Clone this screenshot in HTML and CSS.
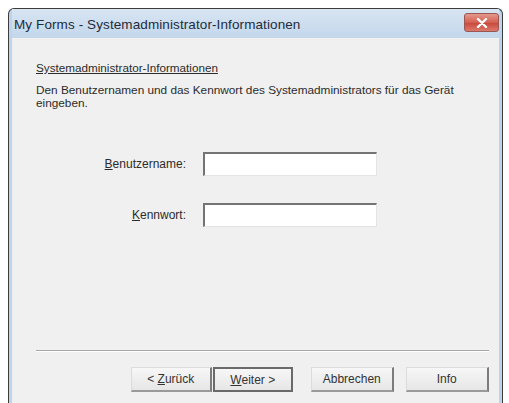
FILE: index.html
```html
<!DOCTYPE html>
<html lang="de">
<head>
    <meta charset="UTF-8">
    <title>My Forms - Systemadministrator-Informationen</title>
    <link rel="stylesheet" href="styles.css">
</head>
<body>
    <div class="window">
        <div class="titlebar">
            <span class="title">My Forms - Systemadministrator-Informationen</span>
            <button class="close-btn" aria-label="Schließen">
                <svg width="12" height="10" viewBox="0 0 12 10">
                    <path d="M2 1 L10 9 M10 1 L2 9" stroke="#fff" stroke-width="2.4" stroke-linecap="round"/>
                </svg>
            </button>
        </div>
        <div class="client">
            <div class="page-head">Systemadministrator-Informationen</div>
            <p class="intro">Den Benutzernamen und das Kennwort des Systemadministrators für das Gerät eingeben.</p>
            <div class="form">
                <label for="user"><u>B</u>enutzername:</label>
                <input type="text" id="user">
                <label for="pass"><u>K</u>ennwort:</label>
                <input type="password" id="pass">
            </div>
            <div class="footer">
                <div class="separator"></div>
                <div class="buttons">
                    <button class="btn back">&lt; <u>Z</u>urück</button>
                    <button class="btn default"><u>W</u>eiter &gt;</button>
                    <button class="btn cancel">Abbrechen</button>
                    <button class="btn">Info</button>
                </div>
            </div>
        </div>
    </div>
</body>
</html>
```

FILE: styles.css
```css
* {
    box-sizing: border-box;
}

html, body {
    overflow: hidden;
}

body {
    margin: 0;
    padding: 8px 6px 0 8px;
    background: #fff;
    font-family: 'Liberation Sans', Arial, sans-serif;
    font-size: 12px;
    color: #2b2b2b;
}

/* window frame */
.window {
    border: 1px solid #3c3c3c;
    border-bottom: none;
    border-radius: 6px 6px 0 0;
    background: #bed4ea;
    padding: 0 3px 0 3px;
    height: 420px;
    display: flex;
    flex-direction: column;
}

.titlebar {
    height: 29px;
    display: flex;
    align-items: flex-start;
    justify-content: space-between;
    padding: 0 0 0 2px;
    background: linear-gradient(#d8e5f2, #c3d7eb);
}

.title {
    font-size: 13.5px;
    color: #1d2c3c;
    margin-top: 8px;
    letter-spacing: 0.1px;
}

.close-btn {
    width: 35px;
    height: 19px;
    margin-top: 4px;
    border: 1px solid #9a5650;
    border-radius: 3px;
    background: linear-gradient(#e39a8e, #d45f50 50%, #c8463a 51%, #dc7a6c);
    display: flex;
    align-items: center;
    justify-content: center;
    padding: 0;
}

/* dialog body */
.client {
    background: #f0f0f0;
    padding: 23px 10px 20px 24px;
    display: flex;
    flex-direction: column;
    height: 374px;
    flex: none;
}

.page-head {
    font-size: 11.7px;
    line-height: 14px;
    text-decoration: underline;
}

.intro {
    margin: 9px 0 0 0;
    font-size: 11.8px;
    line-height: 13px;
    max-width: 440px;
}

.form {
    display: grid;
    grid-template-columns: 150px 174px;
    column-gap: 17px;
    row-gap: 27px;
    align-items: center;
    margin-top: 42px;
}

.form label {
    text-align: right;
}

.form input {
    height: 24px;
    border: 1px solid #e4e4e4;
    border-top: 2px solid #747474;
    border-left: 2px solid #747474;
    background: #fff;
    outline: none;
    font: inherit;
}

.footer {
    margin-top: auto;
}

.separator {
    height: 2px;
    border-top: 1px solid #a7a7a7;
    border-bottom: 1px solid #fff;
}

.buttons {
    display: flex;
    margin-top: 15px;
    padding-left: 95px;
}

.btn {
    width: 81px;
    height: 25px;
    font: inherit;
    color: #333;
    background: linear-gradient(#f7f7f7, #e6e6e6);
    border: 1px solid #dcdcdc;
    border-right: 2px solid #7c7c7c;
    border-bottom: 2px solid #9a9a9a;
    padding: 0;
}

.btn.default {
    margin-left: 1px;
    border: 2px solid #6a6a6a;
}

.btn.cancel {
    margin-left: 18px;
    width: 83px;
}

.btn.cancel + .btn {
    margin-left: 12px;
    width: 84px;
}
```
